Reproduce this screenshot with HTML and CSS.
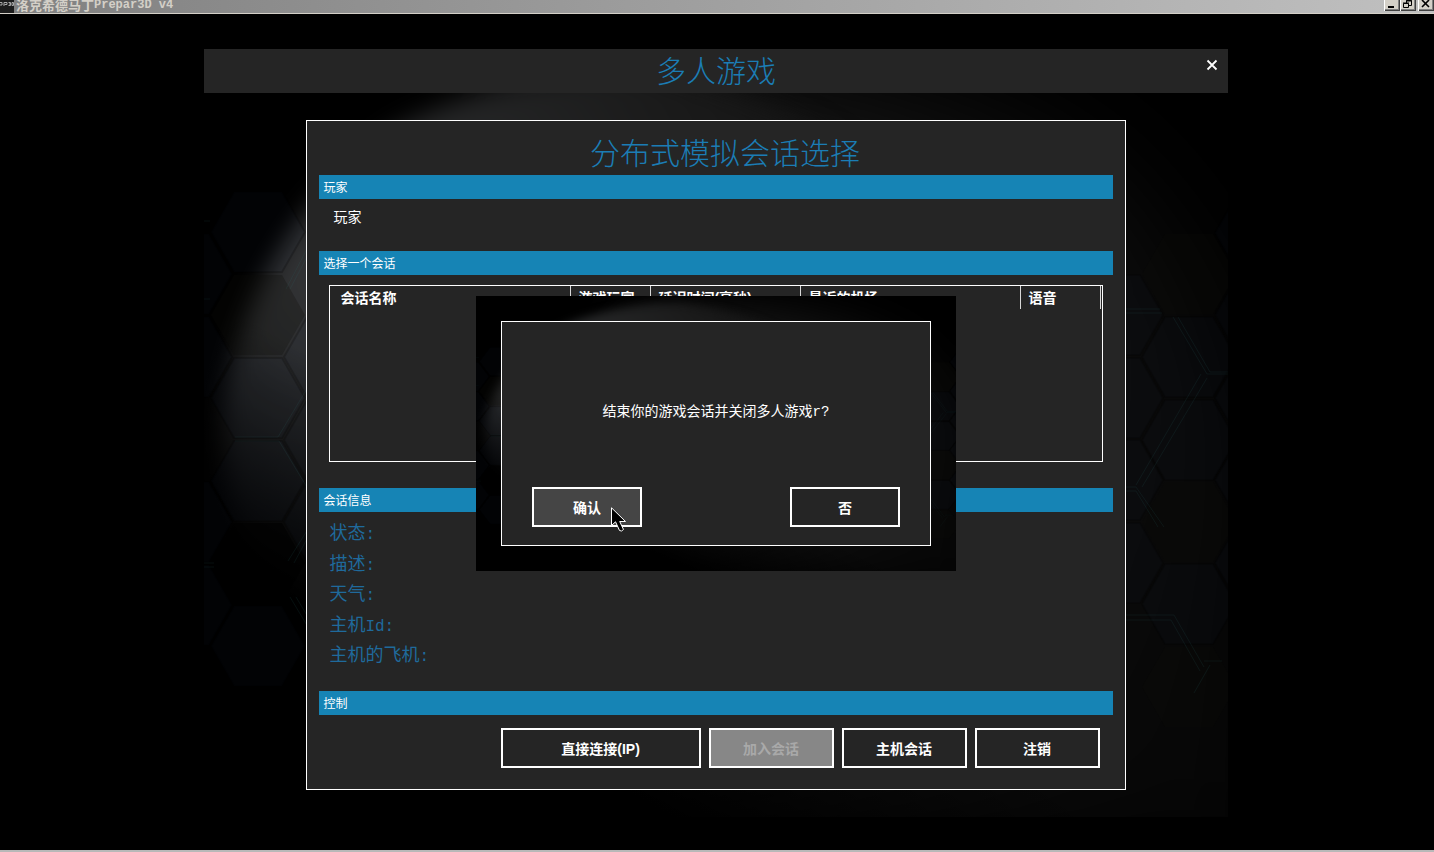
FILE: index.html
```html
<!DOCTYPE html>
<html lang="zh-CN">
<head>
<meta charset="utf-8">
<title>Prepar3D v4</title>
<link rel="stylesheet" href="styles.css">
</head>
<body>
<header class="titlebar">
  <svg class="titlebar-icon" width="14" height="13" viewBox="0 0 14 13" aria-hidden="true">
    <rect width="14" height="13" fill="#1c1c1c"/>
    <path d="M0 2.500h2v2.500H0M4 6V2.500h3v2H4.500M8.500 2.500h2v3h-2M9 4h1.500M12 2.500h1.500v3H12z" fill="none" stroke="#a8a8a8"/>
  </svg>
  <span class="titlebar-name">洛克希德马丁</span>
  <span class="titlebar-product">Prepar3D v4</span>
  <span class="titlebar-buttons">
    <button class="win-button" aria-label="最小化"><svg width="16" height="11" viewBox="0 0 16 11"><path d="M4 7h6" stroke="#000" stroke-width="2"/></svg></button>
    <button class="win-button" aria-label="还原"><svg width="16" height="11" viewBox="0 0 16 11"><path d="M6.500 3V.5h5v5H9M3.500 3.500h5v4h-5zM3 3h6M6 1h6" fill="none" stroke="#000"/></svg></button>
    <button class="win-button win-close" aria-label="关闭"><svg width="16" height="11" viewBox="0 0 16 11"><path d="M4 0l7 7M11 0L4 7" stroke="#000" stroke-width="1.600"/></svg></button>
  </span>
</header>

<main class="stage">
  <div class="app">
    <svg class="backdrop" viewBox="0 0 1024 768" preserveAspectRatio="none" aria-hidden="true">
      <defs>
        <radialGradient id="glow" gradientUnits="userSpaceOnUse" cx="130" cy="230" r="950">
          <stop offset="0" stop-color="#343537"/>
          <stop offset=".15" stop-color="#272829"/>
          <stop offset=".4" stop-color="#1a1a1a"/>
          <stop offset=".7" stop-color="#0e0e0e"/>
          <stop offset="1" stop-color="#070707"/>
        </radialGradient>
        <linearGradient id="shade" gradientUnits="userSpaceOnUse" x1="150" y1="330" x2="40" y2="520">
          <stop offset="0" stop-color="#000" stop-opacity="0"/>
          <stop offset="1" stop-color="#000"/>
        </linearGradient>
        <filter id="soft" filterUnits="userSpaceOnUse" x="-100" y="-100" width="1400" height="1200" color-interpolation-filters="sRGB"><feGaussianBlur stdDeviation="12"/></filter>
        <filter id="softer" filterUnits="userSpaceOnUse" x="-100" y="-100" width="1400" height="1200" color-interpolation-filters="sRGB"><feGaussianBlur stdDeviation="50"/></filter>
        <path id="hex" d="M-24 -40H24L47 0L24 40H-24L-47 0Z"/>
        <symbol id="scene" viewBox="0 0 1024 768" preserveAspectRatio="none">
          <rect width="1024" height="768" fill="#000"/>
          <path d="M330 50Q760 0 900 120Q1060 260 1060 500V800H420Q200 640 330 50Z" fill="url(#glow)" filter="url(#softer)"/>
          <path d="M20 340Q60 170 190 80Q300 20 440 22Q700 60 800 300T560 720Q300 760 120 620Q0 500 20 340Z" fill="url(#glow)" filter="url(#soft)"/>
          <rect width="1024" height="768" fill="url(#shade)"/>
          <g fill="#31598a" fill-opacity=".035" stroke="#000" stroke-opacity=".2" stroke-width="2">
            <use href="#hex" x="54" y="183"/><use href="#hex" x="54" y="349"/><use href="#hex" x="54" y="432"/><use href="#hex" x="54" y="597"/>
            <use href="#hex" x="-19" y="225"/><use href="#hex" x="-19" y="308"/><use href="#hex" x="-19" y="473"/><use href="#hex" x="-19" y="556"/>
            <use href="#hex" x="127" y="308"/><use href="#hex" x="127" y="391"/><use href="#hex" x="127" y="473"/>
            <use href="#hex" x="912" y="266"/><use href="#hex" x="912" y="349"/><use href="#hex" x="912" y="431"/><use href="#hex" x="912" y="514"/>
            <use href="#hex" x="985" y="308"/><use href="#hex" x="985" y="391"/><use href="#hex" x="985" y="555"/>
            <use href="#hex" x="1058" y="184"/><use href="#hex" x="1058" y="266"/><use href="#hex" x="1058" y="349"/><use href="#hex" x="1058" y="431"/><use href="#hex" x="1058" y="514"/>
          </g>
          <g fill="#0c0a08" fill-opacity=".25">
            <use href="#hex" x="54" y="266"/><use href="#hex" x="54" y="514" fill="#000" fill-opacity=".6"/>
            <use href="#hex" x="985" y="225"/><use href="#hex" x="985" y="473"/><use href="#hex" x="985" y="638"/>
          </g>
          <g fill="none" stroke="#2c7474" stroke-opacity=".13">
            <path d="M0 172H6M0 250H6M104 198L82 240M104 206L86 240M31 388H74L104 338M31 392H75L104 440M104 480L84 512M104 488L90 514M0 514H10M0 518H10M86 548L104 578M92 548L104 568"/>
            <path d="M921 260H956M921 264H958M969 268L1003 325H1024M974 268L1006 323H1024M1003 329L938 438M997 325L932 436M920 438H932L960 478M920 442H932L954 478M921 566H970L1000 618M921 571H967L996 622M1000 612H1018M1006 616L990 644"/>
          </g>
        </symbol>
      </defs>
      <use href="#scene" width="1024" height="768"/>
    </svg>

    <div class="app-content">
      <div class="app-header">
        <h1 class="app-title">多人游戏</h1>
        <button class="app-close" aria-label="关闭"><svg width="12" height="12" viewBox="0 0 12 12"><path d="M1.500 1.500l9 9M10.500 1.500l-9 9" stroke="#fff" stroke-width="1.800"/></svg></button>
      </div>

      <section class="panel">
        <h2 class="panel-title">分布式模拟会话选择</h2>

        <h3 class="section-bar">玩家</h3>
        <p class="player-name">玩家</p>

        <h3 class="section-bar">选择一个会话</h3>
        <div class="session-list">
          <table class="session-table">
            <colgroup><col class="col-name"><col class="col-players"><col class="col-latency"><col class="col-airport"><col class="col-voice"></colgroup>
            <thead>
              <tr><th>会话名称</th><th>游戏玩家</th><th>延迟时间(毫秒)</th><th>最近的机场</th><th>语音</th></tr>
            </thead>
          </table>
        </div>

        <h3 class="section-bar">会话信息</h3>
        <ul class="info-list">
          <li>状态<span class="latin">:</span></li>
          <li>描述<span class="latin">:</span></li>
          <li>天气<span class="latin">:</span></li>
          <li>主机<span class="latin">Id:</span></li>
          <li>主机的飞机<span class="latin">:</span></li>
        </ul>

        <h3 class="section-bar">控制</h3>
        <div class="controls">
          <button class="button button-wide">直接连接(IP)</button>
          <button class="button" disabled>加入会话</button>
          <button class="button">主机会话</button>
          <button class="button">注销</button>
        </div>
      </section>
    </div>

    <div class="dialog" role="dialog" aria-labelledby="dialog-message">
      <svg class="backdrop" viewBox="0 0 1024 768" preserveAspectRatio="none" aria-hidden="true"><use href="#scene" width="1024" height="768"/></svg>
      <div class="dialog-box">
        <p class="dialog-message" id="dialog-message"><span>结束你的游戏会话并关闭多人游戏<span class="latin-mono">r?</span></span></p>
        <div class="dialog-actions">
          <button class="button button-small button-hover">确认
            <svg class="cursor" width="16" height="26" viewBox="0 0 16 26" aria-hidden="true"><path d="M.5 .8V18.500L4.500 14.800L8.500 23.500Q10.500 25 12.500 22.500L8.700 14.500H14.500Z" fill="#000" stroke="#fff"/></svg>
          </button>
          <button class="button button-small">否</button>
        </div>
      </div>
    </div>
  </div>
</main>
<footer class="bottom-edge"></footer>
</body>
</html>
```
FILE: styles.css
```css
* {
  box-sizing: border-box;
}

body {
  margin: 0;
  min-height: 100vh;
  display: flex;
  flex-direction: column;
  background: #000;
  color: #fff;
  font-family: "Liberation Sans", "Noto Sans CJK SC", sans-serif;
  font-size: 14px;
}

h1, h2, h3, p, ul {
  margin: 0;
  padding: 0;
  font-weight: 400;
}

button {
  font-family: inherit;
  padding: 0;
}

svg {
  display: block;
}

/* Window title bar */
.titlebar {
  display: flex;
  align-items: flex-start;
  height: 14px;
  background: linear-gradient(90deg, #808080, #c0c0c0);
  border-bottom: 1px solid #d4d0c8;
  color: #d4d0c8;
  font-size: 12px;
  font-weight: 700;
  line-height: 11px;
}

.titlebar-name {
  margin-left: 2px;
  font-size: 13px;
}

.titlebar-product {
  flex: 1;
  font-family: "Liberation Mono", monospace;
}

.titlebar-buttons {
  display: flex;
}

.win-button {
  width: 16px;
  height: 11px;
  border: 0;
  background: #d4d0c8;
  box-shadow: inset 1px 0 #fff, inset -1px -1px #404040, inset -2px -2px #808080;
}

.win-close {
  margin-left: 2px;
}

/* Application window */
.stage {
  flex: 1;
  padding: 35px 2px 32px 0;
}

.app {
  position: relative;
  display: grid;
  max-width: 1024px;
  margin: 0 auto;
}

.backdrop {
  grid-area: 1 / 1;
  width: 100%;
  height: 100%;
  min-height: 0;
}

.app-content {
  grid-area: 1 / 1;
  position: relative;
  padding-bottom: 27px;
}

.app-header {
  display: grid;
  background: #252525;
}

.app-title {
  grid-area: 1 / 1;
  padding-top: 2px;
  text-align: center;
  font-size: 30px;
  font-weight: 300;
  line-height: 42px;
  color: #1b7db5;
}

.app-close {
  grid-area: 1 / 1;
  justify-self: end;
  align-self: start;
  margin: 10px 10px 0 0;
  border: 0;
  background: none;
}

.panel {
  width: 80%;
  min-width: 620px;
  margin: 27px auto 0;
  padding: 12px 12px 21px;
  border: 1px solid #fff;
  background: #252525;
}

.panel-title {
  padding-left: 18px;
  text-align: center;
  font-size: 30px;
  font-weight: 300;
  line-height: 42px;
  color: #1b7db5;
}

.section-bar {
  padding: 2px 0 0 4px;
  background: #1684b5;
  font-size: 12px;
  line-height: 22px;
}

.player-name {
  padding: 0 14px 16px;
  line-height: 36px;
}

.session-list {
  height: 177px;
  margin: 10px 10px 26px;
  border: 1px solid #fff;
  overflow: hidden;
}

.session-table {
  width: 771px;
  table-layout: fixed;
  border-collapse: separate;
  border-spacing: 0;
}

.session-table th {
  padding: 2px 0 0 7px;
  border-right: 1px solid #d8d8d8;
  text-align: left;
  white-space: nowrap;
  line-height: 21px;
}

.session-table th:first-child {
  padding-left: 10px;
}

.col-name { width: 241px; }
.col-players { width: 80px; }
.col-latency { width: 150px; }
.col-airport { width: 220px; }
.col-voice { width: 80px; }

.info-list {
  display: flex;
  flex-direction: column;
  justify-content: space-between;
  height: 179px;
  padding: 6px 10px 21px;
  list-style: none;
  font-size: 18px;
  line-height: 30px;
  color: #1f6a9c;
}

.info-list li {
  height: 30px;
}

.latin {
  font-family: "Liberation Mono", monospace;
  font-size: 16px;
  line-height: 1;
}

.latin-mono {
  font-family: "Liberation Mono", monospace;
}

.controls {
  display: flex;
  justify-content: flex-end;
  gap: 8px;
  padding: 13px 13px 0 0;
}

.button {
  position: relative;
  width: 125px;
  height: 40px;
  border: 2px solid #fff;
  background: #252525;
  color: #fff;
  font-size: 14px;
  font-weight: 700;
}

.button:disabled {
  background: #878787;
  color: #a9a9a9;
}

.button-wide {
  width: 200px;
}

.button-small {
  width: 110px;
}

.button-hover {
  background: #454545;
}

/* Confirmation dialog */
.dialog {
  position: absolute;
  inset: 0;
  display: grid;
  width: 480px;
  height: 275px;
  margin: auto;
}

.dialog > .backdrop {
  height: 275px;
}

.dialog-box {
  grid-area: 1 / 1;
  position: relative;
  display: flex;
  flex-direction: column;
  margin: 25px;
  padding: 0 30px 18px;
  border: 1px solid #fff;
  background: #252525;
}

.dialog-message {
  flex: 1;
  display: flex;
  align-items: center;
  justify-content: center;
  padding-top: 12px;
}

.dialog-actions {
  display: flex;
  justify-content: space-between;
}

.cursor {
  position: absolute;
  left: 77px;
  top: 18px;
}

.bottom-edge {
  height: 2px;
  background: #b8b8b8;
}
```
